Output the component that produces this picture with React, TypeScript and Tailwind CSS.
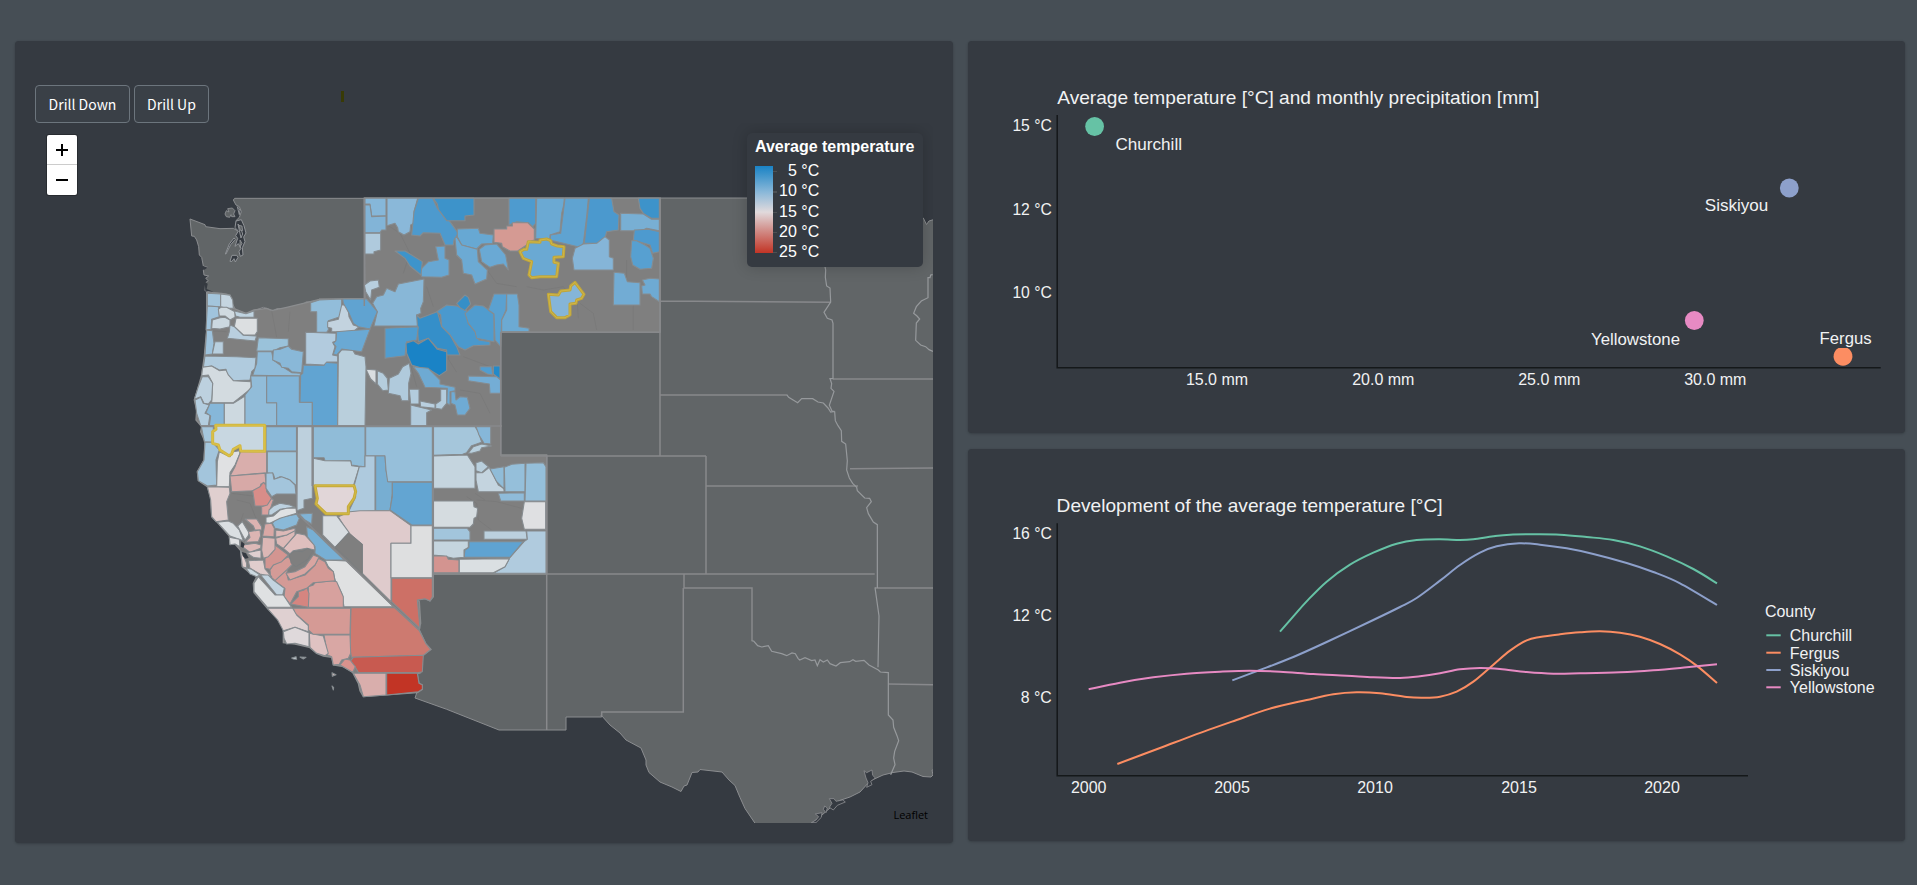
import React from "react";

type Shape = [string, string];

// County polygons, grouped by the local grid in which they are digitised (3 units per pixel).
const mountain: Shape[] = [
  ["#86b7d9", "45,55 108,55 108,107 65,108 60,72 45,72"],
  ["#82b4d7", "45,75 60,75 65,110 108,108 108,150 95,150 90,158 45,158"],
  ["#afcadd", "45,160 92,160 92,210 72,215 72,222 45,222"],
  ["#8ab8d9", "111,55 203,55 192,95 192,130 182,135 180,155 162,165 145,155 143,143 135,130 111,137"],
  ["#4d9ace", "205,55 248,55 262,85 300,125 325,160 312,180 310,195 285,195 270,160 220,158 210,168 185,165 192,95"],
  ["#3d93ca", "250,55 372,55 372,105 345,108 345,122 290,122 265,88 262,72"],
  ["#4e9bcf", "477,55 557,55 557,130 548,140 535,128 500,125 477,135"],
  ["#6aa9d3", "560,55 643,55 641,75 635,100 630,155 600,165 600,178 557,175"],
  ["#5fa3d1", "645,55 715,55 710,110 700,190 690,202 600,180 602,165 632,160"],
  ["#4b99ce", "718,55 785,55 792,95 807,105 805,150 770,155 765,175 745,190 703,190"],
  ["#3d93ca", "865,55 928,55 928,115 905,115 880,100 870,85"],
  ["#78afd4", "812,100 880,102 905,118 928,118 928,152 890,145 875,152 812,152"],
  ["#4d9acf", "853,150 895,148 928,155 928,215 908,220 900,195 850,180"],
  ["#57a0d1", "845,182 860,182 885,195 900,205 910,235 905,265 870,268 848,255 842,230"],
  ["#85b5d8", "667,235 675,205 700,192 740,190 765,170 778,180 778,230 790,235 790,270 672,270"],
  ["#72acd4", "792,277 823,280 832,305 870,308 870,375 790,375"],
  ["#6eaad3", "877,300 900,295 928,297 928,365 905,350 900,342 877,342 875,318 885,315"],
  ["#d59a93", "432,147 470,147 470,138 487,138 487,128 533,128 553,147 553,180 535,185 530,195 503,213 480,213 457,200 455,190 432,187"],
  ["#67a8d3", "322,147 385,145 390,160 430,165 428,190 395,192 380,207 335,195 322,170"],
  ["#6aa9d4", "388,208 405,195 440,192 467,225 475,270 460,252 440,255 420,262 395,245"],
  ["#6caad4", "315,175 320,170 335,195 382,208 385,245 412,270 410,297 375,312 365,285 340,280 335,240 320,225"],
  ["#67a7d3", "257,200 285,198 285,235 297,240 297,285 275,292 215,290 210,270 235,245 265,240"],
  ["#3e94cb", "135,213 165,213 180,222 217,245 213,285 180,258 165,235"],
  ["#b8cfdf", "43,315 60,303 85,300 88,322 65,330 62,360 47,335"],
  ["#88b7d7", "68,370 80,350 100,345 110,325 135,335 145,312 222,297 220,365 212,385 213,400 200,405 205,438 72,438 82,395"],
  ["#4a99ce", "260,395 290,375 320,378 350,390 355,430 380,460 387,480 420,485 420,495 370,497 345,510 325,500 300,465 275,440 272,405"],
  ["#358fc8", "320,370 345,345 355,352 362,372 345,392 330,383"],
  ["#509ccf", "345,400 375,375 400,378 432,402 432,485 380,475 375,455 355,430"],
  ["#5aa1d1", "415,390 432,342 470,342 468,390 455,420 452,500 435,480 432,402"],
  ["#6caad3", "470,342 502,342 507,375 507,440 537,445 537,455 455,455 455,420 470,390"],
  ["#358fc9", "200,405 210,415 262,395 275,440 300,465 320,500 330,525 290,525 290,510 262,505 235,475 205,485"],
  ["#509dd0", "105,445 205,440 200,480 170,485 165,527 105,535"],
  ["#1a83c6", "168,490 190,482 205,492 235,475 262,508 290,515 290,572 268,587 240,570 215,565 185,555 170,520"],
  ["#6eaad3", "190,560 235,565 270,600 270,612 315,622 315,632 300,635 300,675 290,670 292,625 225,622 205,580"],
  ["#519dd0", "390,560 425,560 428,585 412,582 390,570"],
  ["#238ac9", "430,558 450,558 450,598 430,582"],
  ["#74add5", "355,588 440,590 452,600 452,640 420,640 418,612 355,602"],
  ["#6fabd4", "303,635 315,635 318,660 330,650 352,652 360,685 345,705 322,705 315,675 303,670"],
  ["#d9dde0", "48,568 78,570 78,612 62,597"],
  ["#b5cddd", "82,572 100,580 112,595 115,630 98,632 82,612"],
  ["#b0cadc", "118,595 145,582 158,560 178,550 183,580 176,610 176,662 155,662 150,647 115,640"],
  ["#b3ccdd", "178,628 207,628 207,672 182,672"],
  ["#b0cadc", "182,675 245,690 230,698 230,737 182,737"],
  ["#b9cfdf", "210,663 255,672 255,685 212,680"],
  ["#b3ccdd", "272,628 290,628 290,670 275,688 257,685 257,672 272,662"],
];

const northWest: Shape[] = [
  ["#a3c5dc", "82,40 122,42 122,80 82,78"],
  ["#c5d5e0", "122,42 150,46 158,60 160,85 140,85 122,80"],
  ["#a0c4dd", "82,78 115,80 118,110 95,118 93,148 78,150"],
  ["#d0dae0", "115,88 122,82 140,82 165,95 165,112 150,120 135,108 118,108"],
  ["#cbd8e0", "97,120 120,113 135,112 150,120 150,140 120,147 95,145"],
  ["#bfd3e0", "163,93 198,101 222,93 222,112 180,112 167,108"],
  ["#dcdfe1", "168,115 232,115 232,155 225,165 190,165 163,140"],
  ["#b9cfdf", "150,135 163,140 190,166 230,168 225,183 142,175 148,155"],
  ["#9dc2dc", "80,150 97,152 102,190 97,222 75,225"],
  ["#b8cfdf", "105,185 130,185 130,222 97,222"],
  ["#9ac2da", "235,173 325,176 325,198 300,203 280,213 230,213"],
  ["#b0cbde", "75,228 170,230 228,233 225,265 215,275 210,300 160,302 140,280 138,268 118,270 95,258 70,262"],
  ["#8fbbd9", "232,215 275,215 280,240 310,262 335,278 362,280 360,288 218,286 230,250"],
  ["#89b8d8", "280,210 300,208 325,198 335,208 370,215 365,278 335,275 325,265 305,262 300,250 278,240"],
  ["#d3dbe0", "68,262 95,258 118,272 138,270 145,285 160,302 213,305 213,325 195,340 160,368 95,368 98,310 85,285 65,287"],
  ["#bdd1df", "67,290 85,290 98,310 95,360 85,372 72,370 62,350 43,358 55,320"],
  ["#b3cddf", "45,360 62,352 70,370 88,375 75,400 90,405 85,437 62,437 50,400"],
  ["#86b7d9", "90,370 133,370 133,437 88,437 92,408 78,398"],
  ["#cdd9e0", "133,370 160,370 195,348 195,437 133,437"],
  ["#91bcd9", "195,345 215,320 212,288 260,288 260,368 290,368 290,437 195,437"],
  ["#80b4d8", "260,288 358,288 358,367 397,367 397,437 290,437 290,368 260,368"],
  ["#61a4d2", "370,256 432,256 432,247 473,250 473,437 397,437 397,367 360,367 362,285 368,280"],
  ["#b9cfdc", "475,222 485,210 518,210 525,222 555,230 558,260 555,437 473,437"],
  ["#b2cbde", "377,157 468,160 468,183 458,187 465,200 458,225 473,228 473,246 440,246 432,255 377,252"],
  ["#92bdda", "392,68 418,60 485,57 485,100 480,110 445,122 445,150 440,157 410,157 410,95 392,95"],
  ["#c3d3df", "443,125 475,118 485,75 503,75 507,110 520,135 537,140 520,155 455,155 455,145 443,142"],
  ["#60a3d1", "488,57 560,57 592,95 570,147 535,140 520,130 507,100 490,70"],
  ["#6aa9d4", "470,155 505,152 570,148 545,215 485,207 470,225 460,222 468,200 460,190 468,182"],
  ["#a5c6dc", "64,440 100,440 100,487 73,485"],
  ["#8bb9d9", "258,440 350,440 350,513 258,513"],
  ["#a3c5dc", "75,487 98,487 118,510 108,540 110,615 82,618 55,602 52,575 72,540"],
  ["#e0e1e3", "118,515 150,530 160,515 178,512 180,520 165,555 150,578 148,620 110,620 112,545"],
  ["#d9aeac", "182,515 260,515 260,578 150,588 165,560"],
  ["#9fc4db", "262,515 350,515 350,618 325,598 300,590 285,598 280,582 262,578"],
  ["#d7a9a7", "150,588 255,580 258,608 243,612 238,628 215,632 155,635"],
  ["#e0cfcf", "82,620 148,622 150,640 140,665 145,720 108,725 95,710 92,660"],
  ["#d88d89", "240,620 250,607 258,615 260,635 275,655 262,678 225,678 218,632"],
  ["#d9a19e", "245,680 262,675 275,655 280,660 265,705 245,705"],
  ["#a3c5dc", "258,580 278,578 282,598 305,590 330,600 345,615 348,642 290,642 275,650 258,625"],
  ["#bdd0dd", "352,440 397,440 397,655 372,660 372,685 350,692"],
  ["#90bcd8", "400,440 555,440 555,560 535,558 515,555 512,542 435,542 432,533 400,533"],
  ["#c4d4de", "400,535 435,542 512,543 515,557 538,560 520,618 400,617"],
  ["#aecade", "538,560 555,560 555,527 585,527 585,692 505,697 527,650 522,618"],
  ["#77aed2", "587,527 615,527 618,570 625,605 637,605 637,640 630,692 587,692"],
  ["#96bfda", "557,440 757,440 757,605 623,605 618,570 615,527 557,527"],
  ["#63a5d2", "637,607 757,607 757,735 695,735 630,690 637,650"],
  ["#a5c6db", "760,440 885,440 895,455 905,487 875,497 860,518 848,523 760,526"],
  ["#86b7d9", "888,440 932,440 932,492 912,490 897,465"],
  ["#b8cfdd", "864,520 880,500 905,492 935,498 905,503 900,513 875,520"],
  ["#c5d5df", "760,528 862,525 885,560 885,625 760,625"],
  ["#b9cfdd", "888,548 905,543 925,560 905,578 888,572"],
  ["#c4d4df", "888,578 908,578 928,562 945,595 955,615 972,625 972,635 895,635 888,600"],
  ["#90bcd8", "930,567 972,560 972,627 950,605"],
];

const southWest: Shape[] = [
  ["#95bfda", "973,142 995,133 1035,130 1035,215 975,215"],
  ["#95bfda", "1038,130 1090,128 1098,140 1098,243 1035,243"],
  ["#8fbbd9", "955,220 1033,218 1033,243 962,243"],
  ["#d5dce0", "760,243 880,243 882,260 893,265 890,290 882,295 880,312 870,322 760,322"],
  ["#dfe0e2", "1033,245 1097,245 1097,328 1033,328 1025,295"],
  ["#a2c5dc", "760,325 862,325 870,335 870,360 760,360"],
  ["#bbd0de", "912,333 1038,333 1042,358 912,358"],
  ["#b0cbde", "1040,333 1098,333 1098,460 940,460 975,440 990,412 1032,365 1042,358"],
  ["#5fa3d2", "867,365 1030,365 990,412 852,412 855,390 867,382"],
  ["#c5d5df", "760,363 865,363 865,382 852,390 852,412 820,415 790,408 760,405"],
  ["#d39490", "760,408 800,408 805,418 837,420 837,458 760,458"],
  ["#dadfe2", "838,418 988,416 975,440 940,458 838,458"],
  ["#dfcbcc", "475,290 510,275 540,272 630,272 693,317 693,370 633,370 633,545 547,460 547,373 505,340"],
  ["#dedfe0", "693,317 757,317 757,473 633,473 633,370 693,370"],
  ["#d8dde1", "428,287 470,287 507,337 465,382 428,345"],
  ["#cd7066", "635,475 757,475 757,530 750,543 735,536 712,540 720,625 635,545"],
  ["#cd7a70", "513,563 645,563 717,630 738,672 752,688 730,706 515,712 510,690"],
  ["#c85a50", "520,712 730,706 727,755 712,758 535,757 525,740 510,725"],
  ["#c23425", "620,760 712,760 717,790 727,795 727,808 715,815 620,825"],
  ["#d9aeac", "520,760 618,760 618,825 550,830 540,795"],
  ["#d9928d", "495,717 510,720 526,740 518,757 480,735"],
  ["#d9a7a4", "432,645 510,645 512,700 505,715 485,720 478,733 460,735 455,710 443,705"],
  ["#dfc2c2", "388,640 430,648 445,700 435,707 410,700 390,682"],
  ["#d59a95", "340,565 512,565 510,643 400,643 385,630 385,615 345,580"],
  ["#dfd0d1", "262,565 338,565 350,585 385,617 385,635 345,622 310,632 293,600"],
  ["#dfd9db", "310,635 345,622 387,638 387,680 345,670 320,672 312,655"],
  ["#e0e1e2", "435,420 500,423 640,560 492,560 485,520 465,480 460,455 445,440"],
  ["#d7a19e", "385,500 400,495 405,488 455,482 470,485 490,530 490,562 385,562"],
  ["#d58580", "355,515 372,510 380,502 387,520 385,562 332,552 355,530"],
  ["#d49a96", "280,480 325,440 320,460 325,480 375,465 405,435 415,415 435,425 445,445 460,455 465,482 400,488 380,505 350,515 330,552 312,530 315,505"],
  ["#d9a5a1", "318,460 345,455 375,440 400,405 417,412 405,435 375,462 330,480"],
  ["#77afd4", "380,320 400,330 440,370 493,420 437,420 405,400 405,380 382,350"],
  ["#d49b97", "270,450 280,435 325,410 340,430 320,450 285,482 272,470"],
  ["#d39591", "255,415 275,400 285,375 325,405 305,425 280,435 270,448 255,445"],
  ["#dcb7b5", "248,352 285,355 285,388 265,410 250,415 245,390"],
  ["#dfbfbe", "310,385 350,340 375,345 402,375 405,390 380,385 340,392 330,402"],
  ["#dcb9b7", "287,355 320,345 345,330 345,345 310,385 290,372"],
  ["#dcb9b7", "287,330 310,333 345,325 345,332 320,345 287,352"],
  ["#8ab9d8", "285,300 310,290 350,283 358,295 350,315 310,330 285,325 277,310"],
  ["#80b3d6", "358,282 397,280 395,312 375,300"],
  ["#bdd1df", "267,270 280,258 300,250 330,255 345,262 300,268 275,285 266,285"],
  ["#dfe1e3", "258,292 280,288 300,270 320,265 348,264 350,280 300,295 270,310 258,308"],
  ["#d9a8a5", "255,312 275,310 283,325 282,350 248,348"],
  ["#dadfe2", "112,307 145,303 160,310 178,330 190,362 150,348"],
  ["#dee1e3", "173,318 187,305 208,340 203,350 195,360"],
  ["#dcb3b1", "195,297 230,297 245,320 245,330 225,330 220,318"],
  ["#dcb5b3", "205,335 240,330 242,347 235,365 195,367 210,352"],
  ["#dcb9b7", "190,375 225,370 243,375 242,385 210,397 190,382"],
  ["#e0cfcf", "200,398 243,390 243,415 220,412"],
  ["#e0cdcd", "205,422 250,420 255,447 275,470 240,462 210,445"],
  ["#e0cfcf", "182,393 190,405 200,430 200,445 187,440"],
  ["#cbd8e0", "197,443 215,448 240,465 230,470 210,462"],
  ["#c3d4e0", "242,465 265,465 280,480 313,505 308,525 290,525"],
  ["#dfe1e2", "235,470 285,525 310,525 335,562 262,562 222,515 222,490"],
  ["#e0e1e3", "148,352 178,358 180,380 165,372 150,374"],
  ["#c9d3d8", "335,714 348,710 350,718 340,717"],
  ["#c9d3d8", "360,711 378,712 370,717"],
  ["#cfb9b9", "456,758 468,764 457,769"],
  ["#cfb9b9", "456,798 461,803 460,810"],
];

const selected: { fill: string; stroke: string; points: string; transform: string }[] = [
  { fill: "#6aa9d3", stroke: "#bfa53b", transform: "translate(350 180) scale(.33333)", points: "510,215 522,208 530,208 535,185 570,187 570,180 590,177 602,182 605,192 622,198 642,200 640,230 612,232 612,247 625,250 620,290 570,290 545,293 537,285 545,245 520,235" },
  { fill: "#85b5d8", stroke: "#bfa53b", transform: "translate(350 180) scale(.33333)", points: "595,343 625,345 632,333 660,330 662,318 675,307 702,343 695,355 680,360 678,370 660,372 660,405 645,413 620,413 602,395" },
  { fill: "#c8d7e1", stroke: "#d3b840", transform: "translate(180 280) scale(.33333)", points: "107,436 254,436 254,514 182,513 180,497 160,508 155,522 147,527 120,510 115,495 98,490 98,455 108,448" },
  { fill: "#e1d6d8", stroke: "#c6ab3a", transform: "translate(180 280) scale(.33333)", points: "405,617 522,617 527,635 522,655 505,680 505,701 438,701 408,672 412,655" },
];

const naSilhouette =
  "M80,38 125,40 150,45 160,85 198,100 222,90 260,85 275,92 320,82 370,70 418,58 555,55 553,-246 1440,-246 1440,157 962,157 962,525 1100,525 1100,882 760,882 760,950 750,963 735,956 712,960 718,965 722,1030 717,1048 738,1092 753,1108 727,1128 727,1155 722,1178 712,1182 717,1210 727,1215 727,1228 712,1238 550,1250 540,1232 535,1210 518,1177 490,1160 460,1155 455,1132 430,1128 410,1120 388,1102 345,1092 310,1088 310,1045 293,1018 260,983 222,938 220,910 230,890 205,875 187,860 182,812 165,792 150,792 148,768 110,725 95,710 92,650 82,620 55,602 52,575 72,540 75,485 62,455 65,440 48,420 50,390 43,360 55,320 65,285 73,228 80,150Z";

const naBorders =
  "M760,120l40,8 20,25M760,205l50,2 -5,30 25,40M860,650l30,20 5,50 40,30M600,-180l60,40 30,60 -20,60M1000,-200l-10,50 40,40M1040,20l50,10 60,-10 30,40M1200,70l40,30 10,50M1150,30l40,5 5,80M330,95l-5,60M275,92l15,80M140,155l-40,-2M740,20l20,60M900,-60l50,70 60,10M1340,-60l0,80M1380,20l-20,60 0,70M690,250l20,70M850,230l80,30M840,330l60,10 30,60M885,640l30,20M155,640l80,10M170,660l40,10 20,50M190,700l-10,30M890,660l60,5 75,20";

const stateLines =
  "M660,198V456M660,301L830.7,302.3M660,395H786.7M706,456V486M500.7,332.3H660M500.7,332.3V455.7M500.7,456H706M706,486H858M706,486V574M546.7,455V730M546.7,574H874.7M433.3,426V578M364.3,198V306M201,426H502M296.7,426V513L393,606 419,630M312.3,426V486M684,574V588M683.3,588H752V641M683.3,588V712H601.7V717M875,588H933M888.3,684L933,684.7M850,468.7L933,468M833,379H933";

const rivers =
  "M555,50l2,10 -1,22 4,26 10,6 2,42 -20,31 10,18 14,5 3,10V386H570l5,15 -2,14 9,9 -14,42 8,17 8,2 2,27 8,15 10,15 1,32 12,8 5,50 -2,28 8,24 10,16 12,12 2,10 22,22 15,1 5,10 -14,18 5,18 15,25 12,8V1014M440,434l6,8 27,16 12,-12h33l16,10 16,3 14,15 8,12 12,-2M878,74l-6,1 -2,8h-6v60l-20,10 -15,17 -8,20 10,8 8,9 -10,12 -2,52 15,14 15,5 10,9 12,5M705,1014l12,84 -2,150";

const texas =
  "M575,723h6l12,14 12,4 20,-4 10,17 30,7 15,6 16,-8 10,2 8,14 5,5 16,-7 20,9 10,-2 7,17 8,-18 10,7 12,-6 8,11 18,7 13,-10 28,-3 10,-6 8,5 25,-3 15,14 28,15 6,6 24,2v127l14,15 2,22 10,25 5,15 -12,32 -3,20 4,20 -13,30";

function Polys({ data, transform }: { data: Shape[]; transform: string }) {
  return (
    <g transform={transform} stroke="#868c90" strokeWidth="3.2" strokeLinejoin="round">
      {data.map(([fill, points], i) => (
        <polygon key={i} fill={fill} points={points} />
      ))}
    </g>
  );
}

function CountyMap() {
  return (
    <svg className="block" width="898" height="700" viewBox="35 123 898 700">
      <g fill="#616567" stroke="#8b8d90" strokeWidth="1">
        <path
          transform="translate(0 20) scale(.33333)"
          strokeWidth="3"
          d="M704,535H1095V785L1098,837H958L948,845 918,846 905,856 865,865 830,866 820,872 790,862 762,872 738,880 708,872 697,850 695,832 682,823 640,818 615,812 617,788 625,782 617,775 626,768 612,765 610,750 622,742 610,738 605,712 598,705 596,680 590,660 583,649 575,648 570,597 615,614 617,620 660,626 700,625 712,632 716,610 708,602 718,592 724,575 718,560 708,555 700,540Z"
        />
        <path d="M660,198H890L905,212 923.3,218 926.5,224.5 929,221 934,219.5V770H932L933,775 931,777 923,776.5 912,772 904,771 893,772.5 883,775 870,781 860,792 850,797 838,801 830,808 822,815 811,824H755.5L745,808.5 740,797.5 735,785.5 729,780 722,772 700,769.5 698,772 692,772.5 687,785 684,786 681,791.5 672,787 660,782 649,772.5 646,765 646,760 641,748 626,740 620,733 610,725 601,715 601.7,717H566V730H499L446.7,709.3 415,698 417,692 400,680V600L433.3,574H546.7V456H500.7V332.3H660Z" />
      </g>
      <path
        transform="translate(0 20) scale(.33333)"
        fill="#353a41"
        stroke="#919498"
        strokeWidth="3"
        strokeLinejoin="round"
        d="M708,603l16,-4 8,18 6,22 -7,12 4,14 -8,18 2,22 -8,4 -4,-14 6,-10 -8,-14 -10,8 8,-24 -6,-8 8,-14 -10,-10zM676,702l12,-30 14,-18 4,4 -14,16 -14,28zM690,724l6,-18 14,0 4,6 -8,14 -4,-10 -6,8zM712,560l8,10 -2,14zM714,612l8,12 6,18 -5,12 -4,-18z"
      />
      <path transform="translate(0 20) scale(.33333)" fill="#616567" stroke="#919498" strokeWidth="2.5" d="M716,616l10,2 2,14 -7,-1zM720,660l6,10 -6,12zM675,582l4,-10 8,4 -4,-10 14,-2 8,8 -4,10 4,8 -10,0 -2,-6 -4,8 -10,-2z" />
      <path transform="translate(0 20) scale(.33333)" fill="#353a41" d="M609,738l14,5 -12,8zM614,785l9,6 -3,16 20,8 -24,-3z" />
      <path transform="translate(180 280) scale(.33333)" fill="#7f7f7f" stroke="#8b8d8f" strokeWidth="4" d={naSilhouette} />
      <path transform="translate(180 280) scale(.33333)" fill="none" stroke="#767676" strokeWidth="1.5" d={naBorders} />
      <Polys data={mountain} transform="translate(350 180) scale(.33333)" />
      <Polys data={northWest} transform="translate(180 280) scale(.33333)" />
      <Polys data={southWest} transform="translate(180 420) scale(.33333)" />
      <g transform="translate(180 420) scale(.33333)">
        <path fill="#353a41" d="M184,364l10,8 -4,12 -8,-4zM186,396l12,4 8,14 -10,2 -8,-8z" />
        <path fill="#7f7f7f" stroke="#777d80" strokeWidth="2" d="M328,405l15,-12 25,2 15,-10 15,8 -15,25 -35,22 -15,-10zM465,382l42,-44 40,35v87l-45,-45z" />
      </g>
      <g fill="none" stroke="#88898c" strokeWidth="1.5">
        <path d={stateLines} />
        <path transform="translate(640 250) scale(.33333)" stroke="#96999c" strokeWidth="3.6" d={rivers.split("M705,1014")[0]} />
        <path transform="translate(560 400) scale(.33333)" stroke="#96999c" strokeWidth="3.6" d={texas} />
        <path transform="translate(560 400) scale(.33333)" stroke="#96999c" strokeWidth="3.6" d="M945,562l12,86 -3,154" />
      </g>
      <path
        transform="translate(560 400) scale(.33333)"
        fill="#353a41"
        stroke="#8b8d90"
        strokeWidth="2.5"
        d="M912,1112l8,6 16,-8 2,16 8,8 -14,10 4,10 -16,8 4,-14 -6,-14zM808,1196l14,0 6,8 20,-4 8,6 -24,10 -12,14 -12,-8 8,-12zM794,1218l8,6 -4,14 -8,-10zM766,1242l20,-4 -2,14 -16,16h-14l14,-8 8,-10z"
      />
      {selected.map((s) => (
        <g key={s.points} transform={s.transform} strokeLinejoin="round">
          <polygon points={s.points} fill={s.fill} stroke={s.stroke} strokeWidth="9" />
          <polygon points={s.points} fill="none" stroke="#e6d05a" strokeOpacity=".4" strokeWidth="3" />
        </g>
      ))}
    </svg>
  );
}

// Catmull-Rom smoothing through the sampled points.
function smooth(src: string): string {
  const p = src.split(" ").map((s) => s.split(",").map(Number));
  let d = `M${p[0][0]},${p[0][1]}`;
  for (let i = 0; i < p.length - 1; i++) {
    const a = p[i - 1] ?? p[i];
    const b = p[i];
    const c = p[i + 1];
    const e = p[i + 2] ?? c;
    d += `C${b[0] + (c[0] - a[0]) / 6},${b[1] + (c[1] - a[1]) / 6} ${c[0] - (e[0] - b[0]) / 6},${c[1] - (e[1] - b[1]) / 6} ${c[0]},${c[1]}`;
  }
  return d;
}

const series = [
  { name: "Churchill", color: "#66c2a5", legendY: 635.3, pts: "960,575 1000,529 1040,484 1100,425 1170,374 1240,338 1310,311 1370,300 1440,298 1500,300 1540,298 1600,289 1650,284 1720,283 1800,284 1880,291 1960,300 2040,319 2120,349 2200,387 2271,430" },
  { name: "Fergus", color: "#fc8d62", legendY: 652.7, pts: "472,972 600,924 700,886 816,845 930,806 1040,780 1120,763 1190,757 1260,760 1340,771 1390,773 1440,770 1490,755 1540,725 1600,674 1650,632 1700,601 1740,591 1800,583 1860,577 1920,574 1980,578 2040,590 2100,612 2160,643 2210,677 2271,729" },
  { name: "Siskiyou", color: "#8da0cb", legendY: 670, pts: "817,721 900,690 1000,651 1100,606 1240,540 1320,501 1370,474 1440,422 1500,375 1560,338 1610,319 1677,310 1740,314 1820,325 1900,342 2000,369 2080,396 2160,430 2271,495" },
  { name: "Yellowstone", color: "#e78ac3", legendY: 687.3, pts: "386,748 480,728 580,712 680,701 780,695 870,692 960,695 1060,702 1160,707 1240,712 1320,714 1380,709 1440,700 1500,688 1560,684 1620,687 1700,696 1780,701 1860,700 1980,697 2080,691 2180,682 2271,673" },
];

const chartText = "block font-['Liberation_Sans',Arial,sans-serif] text-[16px]";

function Scatter() {
  return (
    <svg className={chartText} width="937" height="392" viewBox="968 41 937 392" fill="#f1f2f3">
      <text x="1057.3" y="104" fontSize="19" textLength="482" lengthAdjust="spacingAndGlyphs">Average temperature [°C] and monthly precipitation [mm]</text>
      <g>
        <text x="1012.4" y="131" textLength="39.4" lengthAdjust="spacingAndGlyphs">15 °C</text>
        <text x="1012.4" y="214.5" textLength="39.4" lengthAdjust="spacingAndGlyphs">12 °C</text>
        <text x="1012.4" y="298" textLength="39.4" lengthAdjust="spacingAndGlyphs">10 °C</text>
      </g>
      <g textAnchor="middle">
        <text x="1217" y="384.5">15.0 mm</text>
        <text x="1383.3" y="384.5">20.0 mm</text>
        <text x="1549.3" y="384.5">25.0 mm</text>
        <text x="1715.3" y="384.5">30.0 mm</text>
      </g>
      <circle cx="1094.6" cy="126.5" r="9.4" fill="#66c2a5" />
      <circle cx="1789.3" cy="188" r="9.4" fill="#8da0cb" />
      <circle cx="1694.3" cy="320.5" r="9.4" fill="#e78ac3" />
      <path d="M1847.5,348A9.4,9.4 0 1 1 1838.5,348Z" fill="#fc8d62" />
      <g fontSize="16.6">
        <text x="1115.5" y="149.7" textLength="66.5" lengthAdjust="spacingAndGlyphs">Churchill</text>
        <text x="1704.8" y="211" textLength="63.5" lengthAdjust="spacingAndGlyphs">Siskiyou</text>
        <text x="1591" y="344.7" textLength="89" lengthAdjust="spacingAndGlyphs">Yellowstone</text>
        <text x="1819.6" y="343.7" textLength="52" lengthAdjust="spacingAndGlyphs">Fergus</text>
      </g>
      <path d="M1057.2,115V367.8H1880.7" fill="none" stroke="#15181a" strokeWidth="1.5" />
    </svg>
  );
}

function Trend() {
  return (
    <svg className={chartText} width="937" height="392" viewBox="968 449 937 392" fill="#f1f2f3">
      <text x="1056.6" y="512" fontSize="19" textLength="386" lengthAdjust="spacingAndGlyphs">Development of the average temperature [°C]</text>
      <g>
        <text x="1012.4" y="538.7" textLength="39.4" lengthAdjust="spacingAndGlyphs">16 °C</text>
        <text x="1012.4" y="620.7" textLength="39.4" lengthAdjust="spacingAndGlyphs">12 °C</text>
        <text x="1020.8" y="702.7" textLength="31" lengthAdjust="spacingAndGlyphs">8 °C</text>
      </g>
      <g textAnchor="middle">
        <text x="1088.7" y="793">2000</text>
        <text x="1232" y="793">2005</text>
        <text x="1375" y="793">2010</text>
        <text x="1519" y="793">2015</text>
        <text x="1662" y="793">2020</text>
      </g>
      <path d="M1057.2,523.3V775.7H1748" fill="none" stroke="#15181a" strokeWidth="1.5" />
      {series.map((s) => (
        <path key={s.name} d={smooth(s.pts)} transform="translate(960 440) scale(.33333)" fill="none" stroke={s.color} strokeWidth="6" />
      ))}
      <text x="1764.9" y="616.7">County</text>
      {series.map((s) => (
        <g key={s.name}>
          <path d={`M1766.3,${s.legendY}h14.4`} stroke={s.color} strokeWidth="2" />
          <text x="1789.8" y={s.legendY + 5.8}>{s.name}</text>
        </g>
      ))}
    </svg>
  );
}

const card = "rounded-[4px] bg-[#353a41] shadow-[0_0_1px_rgba(0,0,0,0.125),0_1px_3px_rgba(0,0,0,0.2)]";
const button =
  "h-[38px] rounded-[4px] border border-[#6c757d] bg-[#3a4047] pb-px text-[14px] leading-none font-normal text-white font-['Noto_Sans_CJK_SC',sans-serif]";

export default function App() {
  return (
    <div className="flex h-[885px] w-[1917px] gap-[15px] overflow-hidden bg-[#464e55] pt-[41px] pl-[15px]">
      <section className={`relative h-[802px] w-[938px] px-5 pt-[44px] ${card}`}>
        <span className="absolute top-[50px] left-[326px] h-[11px] w-[3px] bg-[#383a05]" />
        <div className="flex gap-1">
          <button className={`w-[95px] ${button}`}>Drill Down</button>
          <button className={`w-[75px] ${button}`}>Drill Up</button>
        </div>
        <div className="relative h-[700px] w-[898px] overflow-hidden">
          <CountyMap />
          <div className="absolute top-[12px] left-[12px] flex h-[60px] w-[30px] flex-col rounded-[2px] bg-white shadow-[0_0_0_1px_rgba(0,0,0,0.25)]">
            <button className="flex h-[30px] items-center justify-center border-b border-[#ccc]">
              <svg width="12" height="12" viewBox="0 0 12 12" stroke="#000" strokeWidth="2"><path d="M0,6H12M6,0V12" /></svg>
            </button>
            <button className="flex h-[30px] items-center justify-center">
              <svg width="12" height="12" viewBox="0 0 12 12" stroke="#000" strokeWidth="2"><path d="M0,6H12" /></svg>
            </button>
          </div>
          <div className="absolute top-[10px] right-[10px] h-[134px] w-[176px] rounded-[5px] bg-[#353a41] px-2 pt-[4px] font-['Liberation_Sans',Arial,sans-serif] text-[16px] text-white shadow-[0_0_15px_rgba(0,0,0,0.2)]">
            <div className="text-[16px] leading-[20px] font-bold whitespace-nowrap">Average temperature</div>
            <div className="mt-[4px] flex">
              <div className="mt-[5px] h-[87px] w-[18px] bg-[linear-gradient(to_bottom,#1a83c6_0%,#3e94cb_10%,#8ab8d9_30%,#e1dadc_53%,#d39591_72%,#c23425_100%)]" />
              <div className="mt-[10px] flex flex-col gap-[19px]">
                {[5, 10, 15, 20, 25].map((t) => (
                  <span key={t} className="h-[1.3px] w-[4px] bg-[#4c5054]" />
                ))}
              </div>
              <div className="ml-[2px] text-right leading-[20.25px]">
                {[5, 10, 15, 20, 25].map((t) => (
                  <div key={t}>{t} °C</div>
                ))}
              </div>
            </div>
          </div>
          <div className="absolute right-[5px] bottom-0 font-['Open_Sans',sans-serif] text-[11px] leading-[16px] text-black">Leaflet</div>
        </div>
      </section>
      <div className="flex w-[937px] flex-col gap-4">
        <section className={`h-[392px] ${card}`}>
          <Scatter />
        </section>
        <section className={`h-[392px] ${card}`}>
          <Trend />
        </section>
      </div>
    </div>
  );
}
